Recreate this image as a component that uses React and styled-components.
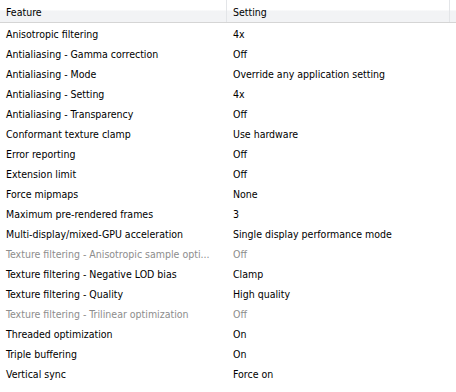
import React from "react";
import styled, { createGlobalStyle } from "styled-components";

const Global = createGlobalStyle`
  html, body { margin: 0; padding: 0; background: #fff; }
  body { font-family: "DejaVu Sans Condensed", "DejaVu Sans", sans-serif; font-size: 10.5px; }
`;

const Table = styled.div`
  width: 456px;
  height: 392px;
  background: #fff;
  overflow: hidden;
`;

const Header = styled.div`
  display: grid;
  grid-template-columns: 227px 223px 1fr;
  height: 22px;
  border-bottom: 1px solid #d5d5d5;
  background: linear-gradient(to bottom, #ffffff 0%, #ffffff 45%, #f2f3f5 50%, #f2f3f5 100%);
`;

const HeadCell = styled.div`
  display: flex;
  align-items: center;
  padding: 1px 0 0 6px;
  border-right: ${p => (p.$last ? "none" : "1px solid #e3e5e8")};
  color: #000;
`;

const Row = styled.div`
  display: grid;
  grid-template-columns: 227px 1fr;
  height: 20px;
  padding-top: 1px;
  box-sizing: border-box;
  align-items: center;
  color: ${p => (p.$disabled ? "#8d8d8d" : "#000")};
`;

const Cell = styled.div`
  padding-left: 6px;
  white-space: nowrap;
  overflow: hidden;
  text-overflow: ellipsis;
`;

const rows = [
  ["Anisotropic filtering", "4x"],
  ["Antialiasing - Gamma correction", "Off"],
  ["Antialiasing - Mode", "Override any application setting"],
  ["Antialiasing - Setting", "4x"],
  ["Antialiasing - Transparency", "Off"],
  ["Conformant texture clamp", "Use hardware"],
  ["Error reporting", "Off"],
  ["Extension limit", "Off"],
  ["Force mipmaps", "None"],
  ["Maximum pre-rendered frames", "3"],
  ["Multi-display/mixed-GPU acceleration", "Single display performance mode"],
  ["Texture filtering - Anisotropic sample opti...", "Off", true],
  ["Texture filtering - Negative LOD bias", "Clamp"],
  ["Texture filtering - Quality", "High quality"],
  ["Texture filtering - Trilinear optimization", "Off", true],
  ["Threaded optimization", "On"],
  ["Triple buffering", "On"],
  ["Vertical sync", "Force on"],
];

export default function App() {
  return (
    <Table>
      <Global />
      <Header>
        <HeadCell>Feature</HeadCell>
        <HeadCell>Setting</HeadCell>
        <HeadCell $last />
      </Header>
      {rows.map(([f, s, d]) => (
        <Row key={f} $disabled={d}>
          <Cell>{f}</Cell>
          <Cell>{s}</Cell>
        </Row>
      ))}
    </Table>
  );
}
